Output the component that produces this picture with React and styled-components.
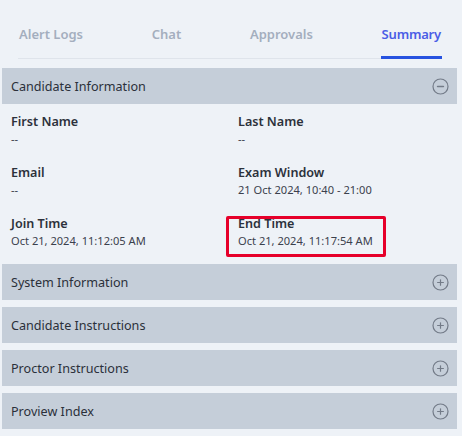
import React from "react";
import styled, { createGlobalStyle } from "styled-components";

const GlobalStyle = createGlobalStyle`
  html, body {
    margin: 0;
    background: #eef2f7;
  }
  body {
    font-family: "Noto Sans", "Open Sans", sans-serif;
  }
`;

const Page = styled.div`
  width: 455px;
  padding: 0 0 0 2px;
`;

const Tabs = styled.div`
  display: flex;
  justify-content: space-between;
  margin: 0 15px 9px 16px;
  padding-top: 25px;
  border-bottom: 1px solid #dfe4eb;
`;

const Tab = styled.div`
  font-size: 13px;
  font-weight: 600;
  line-height: 18px;
  letter-spacing: ${(p) => (p.active ? "-0.2px" : "0")};
  color: ${(p) => (p.active ? "#4a5de6" : "#a4aebe")};
  padding: 0 1px 13px;
  margin-bottom: -1px;
  border-bottom: 3px solid ${(p) => (p.active ? "#2753e0" : "transparent")};
`;

const Sections = styled.div`
  display: flex;
  flex-direction: column;
  gap: 7px;
`;

const Header = styled.div`
  height: 36px;
  display: flex;
  align-items: center;
  justify-content: space-between;
  padding: 0 8px 0 9px;
  background: #c5ced9;
  font-size: 12.6px;
  color: #2b303a;
`;

const Body = styled.div`
  display: grid;
  grid-template-columns: 227px 1fr;
  row-gap: 17px;
  padding: 9px 9px 8px 9px;
`;

const Cell = styled.div`
  position: relative;
  display: flex;
  flex-direction: column;

  ${(p) =>
    p.highlighted &&
    `
    &::after {
      content: "";
      position: absolute;
      left: -12px;
      top: 1px;
      width: 154px;
      height: 35px;
      border: 3px solid #e6002a;
      border-radius: 2px;
    }
  `}
`;

const Label = styled.div`
  font-size: 12.6px;
  font-weight: 600;
  line-height: 18px;
  color: #2c313b;
`;

const Value = styled.div`
  font-size: 11.1px;
  line-height: 16px;
  color: #3b414d;
`;

const Toggle = ({ open }) => (
  <svg width="17" height="17" viewBox="0 0 17 17" fill="none">
    <circle cx="8.5" cy="8.5" r="7.5" stroke="#737b88" strokeWidth="1.2" />
    <line
      x1="5.6"
      y1="8.5"
      x2="11.4"
      y2="8.5"
      stroke="#737b88"
      strokeWidth={open ? 1.6 : 1.2}
      strokeLinecap="round"
    />
    {!open && (
      <line
        x1="8.5"
        y1="5.8"
        x2="8.5"
        y2="11.2"
        stroke="#737b88"
        strokeWidth="1.2"
        strokeLinecap="round"
      />
    )}
  </svg>
);

const fields = [
  { label: "First Name", value: "--" },
  { label: "Last Name", value: "--" },
  { label: "Email", value: "--" },
  { label: "Exam Window", value: "21 Oct 2024, 10:40 - 21:00" },
  { label: "Join Time", value: "Oct 21, 2024, 11:12:05 AM" },
  { label: "End Time", value: "Oct 21, 2024, 11:17:54 AM", highlighted: true },
];

const collapsed = [
  "System Information",
  "Candidate Instructions",
  "Proctor Instructions",
  "Proview Index",
];

const tabs = ["Alert Logs", "Chat", "Approvals", "Summary"];

export default function App() {
  return (
    <>
      <GlobalStyle />
      <Page>
        <Tabs>
          {tabs.map((t) => (
            <Tab key={t} active={t === "Summary"}>
              {t}
            </Tab>
          ))}
        </Tabs>
        <Sections>
          <div>
            <Header>
              <span>Candidate Information</span>
              <Toggle open />
            </Header>
            <Body>
              {fields.map((f) => (
                <Cell key={f.label} highlighted={f.highlighted}>
                  <Label>{f.label}</Label>
                  <Value>{f.value}</Value>
                </Cell>
              ))}
            </Body>
          </div>
          {collapsed.map((s) => (
            <Header key={s}>
              <span>{s}</span>
              <Toggle />
            </Header>
          ))}
        </Sections>
      </Page>
    </>
  );
}
